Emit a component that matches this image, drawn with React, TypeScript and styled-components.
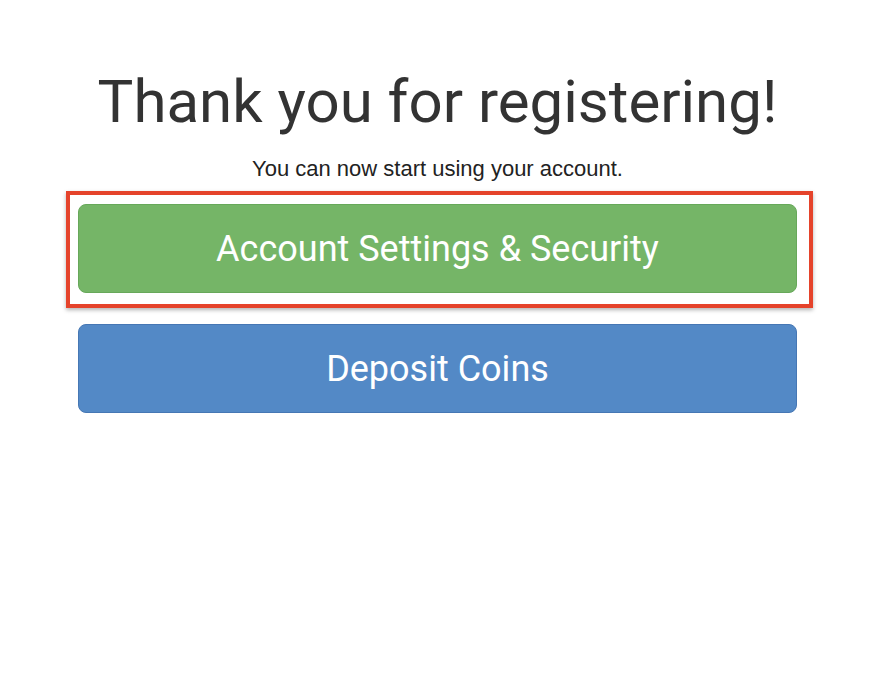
import styled, { createGlobalStyle } from 'styled-components';

const Global = createGlobalStyle`
    html, body {
        margin: 0;
        background: #ffffff;
    }
`;

const Page = styled.main`
    display: flex;
    flex-direction: column;
    width: 719px;
    margin-left: 78px;
    padding-top: 66px;
`;

const Title = styled.h1`
    margin: 0;
    text-align: center;
    white-space: nowrap;
    font-family: Roboto, "Liberation Sans", sans-serif;
    font-weight: 400;
    font-size: 60px;
    line-height: 72px;
    color: #333333;
`;

const Lead = styled.p`
    margin: 17px 0 0;
    text-align: center;
    font-family: "Liberation Sans", Arial, sans-serif;
    font-size: 22px;
    line-height: 28px;
    color: #222222;
`;

const Actions = styled.div`
    display: flex;
    flex-direction: column;
    gap: 31px;
    margin-top: 21px;
`;

const Slot = styled.div`
    position: relative;
`;

// red annotation frame drawn over the first button
const Highlight = styled.div`
    position: absolute;
    top: -13px;
    left: -12px;
    width: 739px;
    height: 109px;
    border: 4px solid #e5432b;
    box-shadow: 0 2px 4px rgba(0, 0, 0, 0.3);
    pointer-events: none;
`;

const Button = styled.button<{ $tone: 'green' | 'blue' }>`
    display: flex;
    align-items: center;
    justify-content: center;
    width: 100%;
    height: 89px;
    padding: 0;
    border-radius: 8px;
    border: 1px solid ${p => (p.$tone === 'green' ? '#67a85a' : '#4677b4')};
    background: ${p => (p.$tone === 'green' ? '#75b567' : '#5389c6')};
    color: #ffffff;
    font-family: Roboto, "Liberation Sans", sans-serif;
    font-size: 36px;
    cursor: pointer;
`;

export default function App() {
    return (
        <>
            <Global />
            <Page>
                <Title>Thank you for registering!</Title>
                <Lead>You can now start using your account.</Lead>
                <Actions>
                    <Slot>
                        <Button $tone="green">Account Settings &amp; Security</Button>
                        <Highlight />
                    </Slot>
                    <Slot>
                        <Button $tone="blue">Deposit Coins</Button>
                    </Slot>
                </Actions>
            </Page>
        </>
    );
}
